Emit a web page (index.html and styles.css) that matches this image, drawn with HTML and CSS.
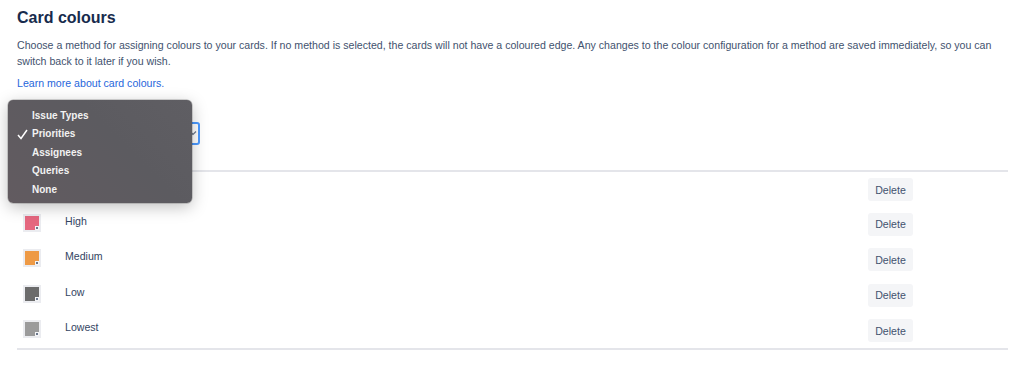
FILE: index.html
```html
<!DOCTYPE html>
<html lang="en">
<head>
    <meta charset="UTF-8">
    <title>Card colours</title>
    <link rel="stylesheet" href="styles.css">
</head>
<body>
    <div class="page">
        <h1>Card colours</h1>
        <p class="intro">Choose a method for assigning colours to your cards. If no method is selected, the cards will not have a coloured edge. Any changes to the colour configuration for a method are saved immediately, so you can switch back to it later if you wish.</p>
        <a class="learn" href="#">Learn more about card colours.</a>

        <!-- method select (focused, menu open over it) -->
        <div class="select">
            <svg class="chevron" width="8" height="6" viewBox="0 0 8 6"><path d="M1 1.5 L4 4.5 L7 1.5" fill="none" stroke="#6B778C" stroke-width="1.2"/></svg>
        </div>

        <table class="colours">
            <tr>
                <td class="c-swatch"><span class="swatch" style="background:#D04437"><i></i></span></td>
                <td class="c-name">Highest</td>
                <td class="c-action"><button class="btn">Delete</button></td>
            </tr>
            <tr>
                <td class="c-swatch"><span class="swatch" style="background:#E5677F"><i></i></span></td>
                <td class="c-name">High</td>
                <td class="c-action"><button class="btn">Delete</button></td>
            </tr>
            <tr>
                <td class="c-swatch"><span class="swatch" style="background:#EE9A45"><i></i></span></td>
                <td class="c-name">Medium</td>
                <td class="c-action"><button class="btn">Delete</button></td>
            </tr>
            <tr>
                <td class="c-swatch"><span class="swatch" style="background:#6B6B6B"><i></i></span></td>
                <td class="c-name">Low</td>
                <td class="c-action"><button class="btn">Delete</button></td>
            </tr>
            <tr>
                <td class="c-swatch"><span class="swatch" style="background:#9B9B9B"><i></i></span></td>
                <td class="c-name">Lowest</td>
                <td class="c-action"><button class="btn">Delete</button></td>
            </tr>
        </table>
    </div>

    <!-- native popup menu -->
    <ul class="menu">
        <li>Issue Types</li>
        <li class="checked">
            <svg class="check" width="11" height="11" viewBox="0 0 11 11"><path d="M1 6 L4 9.5 L10 1" fill="none" stroke="#fff" stroke-width="1.5"/></svg>
            Priorities
        </li>
        <li>Assignees</li>
        <li>Queries</li>
        <li>None</li>
    </ul>
</body>
</html>
```

FILE: styles.css
```css
body {
    margin: 0;
    background: #fff;
    font-family: 'Liberation Sans', Arial, sans-serif;
    color: #42526E;
}
.page {
    padding: 6px 12px 0 17px;
}
h1 {
    margin: 0;
    font-size: 16px;
    line-height: 24px;
    font-weight: bold;
    color: #172B4D;
}
.intro {
    margin: 7px 0 0;
    font-size: 10.6px;
    line-height: 16px;
    max-width: 990px;
}
.learn {
    display: block;
    margin-top: 6px;
    font-size: 10.6px;
    line-height: 16px;
    color: #1F66DB;
    text-decoration: none;
}
.select {
    display: flex;
    align-items: center;
    justify-content: flex-end;
    box-sizing: border-box;
    width: 183px;
    height: 23px;
    margin-top: 31px;
    padding: 0 1px 2px 0;
    border: 2px solid #4C9AFF;
    border-radius: 3px;
}
.colours {
    width: 991px;
    margin-top: 25px;
    border-collapse: collapse;
    border-top: 2px solid #E4E5EA;
    border-bottom: 2px solid #E4E5EA;
}
.colours tr {
    height: 35.5px;
}
.colours td {
    padding: 6px 0 0;
    vertical-align: top;
    font-size: 10.6px;
    line-height: 16px;
    color: #344563;
}
.c-swatch {
    width: 42px;
    padding-left: 6px !important;
}
.c-action {
    width: 140px;
}
.swatch {
    position: relative;
    display: block;
    width: 14px;
    height: 14px;
    margin-top: 1px;
    border: 2px solid #EBECF0;
}
.swatch i {
    position: absolute;
    right: 0;
    bottom: 0;
    width: 4px;
    height: 4px;
    background: #F4F5F7;
}
.swatch i::after {
    content: '';
    position: absolute;
    left: 1px;
    top: 1px;
    width: 2px;
    height: 2px;
    background: #6B778C;
}
.btn {
    display: block;
    width: 45px;
    height: 23px;
    padding: 0;
    border: none;
    border-radius: 3px;
    background: #F4F5F7;
    color: #42526E;
    font-family: inherit;
    font-size: 10.6px;
}
.menu {
    position: absolute;
    left: 8px;
    top: 100px;
    width: 184px;
    height: 103px;
    box-sizing: border-box;
    margin: 0;
    padding: 7px 0 0 24px;
    list-style: none;
    border-radius: 5px;
    background: linear-gradient(45deg, #625b60, #5c5b60 60%, #5f5e63);
    box-shadow: 0 4px 16px rgba(0,0,0,0.25), 0 0 0 0.5px rgba(0,0,0,0.3);
    color: #F2F2F2;
    font-size: 10px;
    font-weight: bold;
}
.menu li {
    position: relative;
    height: 18.4px;
    line-height: 18.4px;
}
.check {
    position: absolute;
    left: -15px;
    top: 4px;
}
```
